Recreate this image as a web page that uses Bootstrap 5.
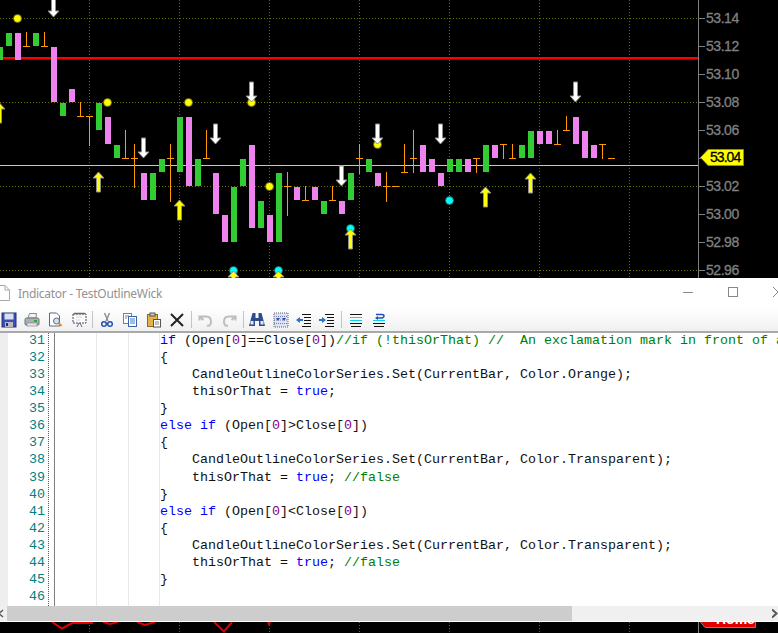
<!DOCTYPE html>
<html lang="en">
<head>
<meta charset="UTF-8">
<title>Indicator - TestOutlineWick</title>
<link href="https://cdn.jsdelivr.net/npm/bootstrap@5.3.3/dist/css/bootstrap.min.css" rel="stylesheet">
<script src="https://cdn.jsdelivr.net/npm/bootstrap@5.3.3/dist/js/bootstrap.bundle.min.js"></script>
<style>
html, body { height: 633px; overflow: hidden; background: #000; }
/* chart */
.chart-pane { height: 278px; overflow: hidden; }
.chart-pane svg { display: block; flex: none; }
.price-axis { width: 80px; border-left: 1px solid #808080; padding-top: 4px; font: 14px/28px "Liberation Sans", Arial, sans-serif; color: #808080; letter-spacing: -.45px; -webkit-text-stroke: .3px #808080; }
.axis-row { height: 28px; flex: none; }
.axis-tick { width: 6px; height: 1px; background: #808080; margin-right: 1px; }
.price-flag { position: absolute; left: 700px; top: 149px; width: 44px; height: 17px; }
.price-flag svg { position: absolute; left: 0; top: 0; }
.price-flag span { position: relative; display: block; padding-left: 10px; font: 14px/17px "Liberation Sans", Arial, sans-serif; letter-spacing: -.95px; color: #000; -webkit-text-stroke: .3px #000; }
/* editor window */
.editor-win { height: 343px; background: #fff; }
.title-bar { height: 30px; overflow: hidden; }
.doc-icon { flex: none; }
.title-text { font: 12px "Noto Sans", sans-serif; color: #929292; margin-left: 8px; letter-spacing: -.28px; padding-top: 1px; }
.win-controls { margin-right: -22px; flex: none; }
.win-btn { width: 45px; height: 30px; margin-top: -2px; }
.tool-bar { height: 25px; background: linear-gradient(#fff, #f0f0f0); border-bottom: 2px solid #a9a9a9; overflow: hidden; }
.tool-item { width: 23.2px; height: 23px; flex: none; }
.tool-item:first-child { margin-left: -2.6px; }
.tool-sep { width: 5.5px; height: 23px; flex: none; }
.tool-sep::after { content: ""; width: 1px; height: 17px; background: #c4c4c4; }
.code-pane { height: 273px; overflow: hidden; font: 13.33px/17.06px "Liberation Mono", "Courier New", monospace; }
.gutter-strip { width: 8px; background: #eeeeee; flex: none; }
.line-nums { width: 41px; flex: none; padding-right: 3px; text-align: right; color: #008080; border-right: 1px dotted #008080; }
.line-nums div:first-child, .code-body div:first-child { margin-top: -1px; }
.gutter-gap { width: 6px; flex: none; border-right: 1px solid #808080; }
.code-body { flex: 1 1 auto; min-width: 0; white-space: pre; overflow: hidden; padding-left: 105px; color: #111;
  background-image: linear-gradient(#e9e9e9, #e9e9e9), linear-gradient(#e9e9e9, #e9e9e9), linear-gradient(#e9e9e9, #e9e9e9);
  background-size: 1px 100%; background-repeat: no-repeat; background-position: 41px 0, 73px 0, 104px 0; }
.kw { color: #0000ff; }
.num { color: #800080; }
.cmt { color: #008000; }
.hscroll { height: 15px; background: #f0f0f0; }
.hscroll-end { width: 7px; flex: none; }
.hscroll-thumb { width: 565px; background: #cdcdcd; flex: none; }
.bottom-strip { height: 12px; border-top: 1px solid #fff; background: #000; overflow: hidden; }
.bottom-strip svg { display: block; }
.tag-text { font: bold 14px "Liberation Sans", Arial, sans-serif; fill: #fff; }
</style>
</head>
<body>

<!-- Chart -->
<div class="chart-pane d-flex position-relative bg-black">
  <svg id="chart" width="698" height="278" viewBox="0 0 698 278"></svg>
  <div class="price-axis flex-shrink-0">
    <div class="axis-row d-flex align-items-center"><span class="axis-tick"></span>53.14</div>
    <div class="axis-row d-flex align-items-center"><span class="axis-tick"></span>53.12</div>
    <div class="axis-row d-flex align-items-center"><span class="axis-tick"></span>53.10</div>
    <div class="axis-row d-flex align-items-center"><span class="axis-tick"></span>53.08</div>
    <div class="axis-row d-flex align-items-center"><span class="axis-tick"></span>53.06</div>
    <div class="axis-row d-flex align-items-center"><span class="axis-tick"></span></div>
    <div class="axis-row d-flex align-items-center"><span class="axis-tick"></span>53.02</div>
    <div class="axis-row d-flex align-items-center"><span class="axis-tick"></span>53.00</div>
    <div class="axis-row d-flex align-items-center"><span class="axis-tick"></span>52.98</div>
    <div class="axis-row d-flex align-items-center"><span class="axis-tick"></span>52.96</div>
  </div>
  <div class="price-flag">
    <svg width="44" height="17"><path d="M.5 8.500 8 .5h35.500v16H8z" fill="#ffff00" stroke="#808080"/></svg>
    <span>53.04</span>
  </div>
</div>

<!-- Editor window -->
<div class="editor-win d-flex flex-column">
  <div class="title-bar d-flex align-items-center">
    <svg class="doc-icon" width="10" height="16" viewBox="0 0 10 16"><path d="M-3 .5h8l4.500 4.500v10.500h-12.500" fill="#fff" stroke="#a8a8a8"/><path d="M5 .5v4.500h4.500" fill="none" stroke="#a8a8a8"/></svg>
    <span class="title-text">Indicator - TestOutlineWick</span>
    <div class="win-controls d-flex ms-auto">
      <div class="win-btn d-flex align-items-center justify-content-center"><svg width="10" height="10"><path d="M0 5.500h10" stroke="#888"/></svg></div>
      <div class="win-btn d-flex align-items-center justify-content-center"><svg width="10" height="10"><rect x=".5" y=".5" width="9" height="9" fill="none" stroke="#888"/></svg></div>
      <div class="win-btn d-flex align-items-center justify-content-center"><svg width="10" height="10"><path d="M0 0l10 10M10 0 0 10" stroke="#888"/></svg></div>
    </div>
  </div>

  <div class="tool-bar d-flex">
    <div class="tool-item d-flex align-items-center justify-content-center"><svg width="16" height="16" viewBox="0 0 16 16"><rect x="1" y="1" width="14" height="14" fill="#3d4fb0" stroke="#26307a"/><rect x="3.500" y="1.500" width="9" height="6" fill="#d8e0f4"/><rect x="4" y="10" width="8" height="5" fill="#b9b9c4"/><rect x="5" y="11" width="2" height="3" fill="#2a2f66"/></svg></div>
    <div class="tool-item d-flex align-items-center justify-content-center"><svg width="16" height="16" viewBox="0 0 16 16"><path d="M4 6 5.500 1.500h7L12 6z" fill="#f4f4f4" stroke="#8a8a8a"/><path d="M1 7.500q0-1.500 1.500-1.500h11q1.500 0 1.500 1.500v4.500q0 1-1 1H2q-1 0-1-1z" fill="#a8b0b8" stroke="#6c747c"/><rect x="3" y="11" width="10" height="3" fill="#e8e8e8" stroke="#777" stroke-width=".6"/><rect x="10" y="8" width="3" height="2" fill="#22b422"/></svg></div>
    <div class="tool-item d-flex align-items-center justify-content-center"><svg width="16" height="16" viewBox="0 0 16 16"><path d="M2.500 1h7l3 3v10h-10z" fill="#fff" stroke="#5a6a88"/><circle cx="9.500" cy="9" r="3" fill="#cfe4f4" stroke="#667"/><path d="m11.500 11 3 3" stroke="#e09020" stroke-width="2"/></svg></div>
    <div class="tool-item d-flex align-items-center justify-content-center"><svg width="16" height="16" viewBox="0 0 16 16"><rect x="2" y="2" width="13" height="9" fill="#fbfbf4" stroke="#3c4a6a" stroke-dasharray="2 1"/><path d="M3 1.500h11" stroke="#7a6a4a" stroke-width="1.500"/><path d="m8 11-2 4M9 11l2 4" stroke="#5a6a88"/><path d="M5 5h6M5 8h4" stroke="#d0d8e4"/></svg></div>
    <div class="tool-sep d-flex align-items-center justify-content-center"></div>
    <div class="tool-item d-flex align-items-center justify-content-center"><svg width="16" height="16" viewBox="0 0 16 16"><path d="m5.500 1 3.500 8M10.500 1 7 9" stroke="#8c8c98" stroke-width="1.400"/><circle cx="5" cy="12" r="2.300" fill="none" stroke="#2450b8" stroke-width="1.500"/><circle cx="11" cy="12" r="2.300" fill="none" stroke="#2450b8" stroke-width="1.500"/></svg></div>
    <div class="tool-item d-flex align-items-center justify-content-center"><svg width="16" height="16" viewBox="0 0 16 16"><rect x="1.500" y="1.500" width="8" height="10" fill="#fff" stroke="#6a82aa"/><rect x="6.500" y="4.500" width="8" height="10" fill="#fff" stroke="#3a62a8"/><path d="M8 7h5M8 9h5M8 11h5" stroke="#3f78d0"/><path d="M3 4h4M3 6h2" stroke="#6a82aa"/></svg></div>
    <div class="tool-item d-flex align-items-center justify-content-center"><svg width="16" height="16" viewBox="0 0 16 16"><rect x="1.500" y="2.500" width="10" height="12" fill="#e2b24c" stroke="#8a6a2a"/><rect x="4" y="1" width="5" height="3" fill="#c9c9c9" stroke="#555"/><rect x="7.500" y="7.500" width="7" height="7.500" fill="#fff" stroke="#555"/><path d="M9 10h4M9 12h4" stroke="#888"/></svg></div>
    <div class="tool-item d-flex align-items-center justify-content-center"><svg width="16" height="16" viewBox="0 0 16 16"><path d="m2 2 12 12M14 2 2 14" stroke="#222" stroke-width="2"/></svg></div>
    <div class="tool-sep d-flex align-items-center justify-content-center"></div>
    <div class="tool-item d-flex align-items-center justify-content-center"><svg width="16" height="16" viewBox="0 0 16 16"><path d="M5 4.500h-3.500v4M1.500 4.500 5.500 8M4 4.500h4q5 0 5 5t-4 4" fill="none" stroke="#bdbdbd" stroke-width="2"/></svg></div>
    <div class="tool-item d-flex align-items-center justify-content-center"><svg width="16" height="16" viewBox="0 0 16 16"><path d="M11 4.500h3.500v4M14.500 4.500 10.500 8M12 4.500h-4q-5 0-5 5t4 4" fill="none" stroke="#bdbdbd" stroke-width="2"/></svg></div>
    <div class="tool-sep d-flex align-items-center justify-content-center"></div>
    <div class="tool-item d-flex align-items-center justify-content-center"><svg width="16" height="16" viewBox="0 0 16 16"><path d="M3.500 1h3v5h3V1h3L16 14h-6V9H6v5H0z" fill="#2c4a8c"/><rect x="1.500" y="9" width="3" height="3.500" fill="#dfe8f6"/><rect x="11.500" y="9" width="3" height="3.500" fill="#dfe8f6"/></svg></div>
    <div class="tool-item d-flex align-items-center justify-content-center"><svg width="16" height="16" viewBox="0 0 16 16"><rect x="1" y="1" width="14" height="14" fill="#dfe2f2" stroke="#5b6080" stroke-dasharray="1 1"/><path d="M1 4.500h14M1 8h14M1 11.500h14" stroke="#7a7e9c" stroke-dasharray="1 1"/><path d="M3 6h4L5 9zM9 6h4l-2 3z" fill="#1e50c8"/></svg></div>
    <div class="tool-item d-flex align-items-center justify-content-center"><svg width="16" height="16" viewBox="0 0 16 16"><path d="M6 2.500h9M8 5.500h7M8 8.500h7M8 11.500h7M6 14.500h9" stroke="#111"/><path d="M7 7H4V5L0 8l4 3V9h3z" fill="#2a6ed0"/></svg></div>
    <div class="tool-item d-flex align-items-center justify-content-center"><svg width="16" height="16" viewBox="0 0 16 16"><path d="M6 2.500h9M8 5.500h7M8 8.500h7M8 11.500h7M6 14.500h9" stroke="#111"/><path d="M0 7h3V5l4 3-4 3V9H0z" fill="#2a6ed0"/></svg></div>
    <div class="tool-sep d-flex align-items-center justify-content-center"></div>
    <div class="tool-item d-flex align-items-center justify-content-center"><svg width="16" height="16" viewBox="0 0 16 16"><path d="M2 2.500h12M2 11.500h12M3 14.500h10" stroke="#111"/><path d="M2 5.500h12M2 8.500h12" stroke="#10d0f0"/></svg></div>
    <div class="tool-item d-flex align-items-center justify-content-center"><svg width="16" height="16" viewBox="0 0 16 16"><path d="M5 2.500h6q2 0 2 1.500t-2 2H7" fill="none" stroke="#2050c0" stroke-width="1.500"/><path d="M7 4v4L4 6z" fill="#2050c0"/><path d="M2 8.500h12" stroke="#10d0f0"/><path d="M2 11.500h12M3 14.500h10" stroke="#111"/></svg></div>
  </div>

  <div class="code-pane d-flex">
    <div class="gutter-strip"></div>
    <div class="line-nums" id="lineNums"></div>
    <div class="gutter-gap"></div>
    <div class="code-body"><div><span class="kw">if</span> (Open[<span class="num">0</span>]==Close[<span class="num">0</span>])<span class="cmt">//if (!thisOrThat) //  An exclamation mark in front of a</span></div><div>{</div><div>    CandleOutlineColorSeries.Set(CurrentBar, Color.Orange);</div><div>    thisOrThat = <span class="kw">true</span>;</div><div>}</div><div><span class="kw">else if</span> (Open[<span class="num">0</span>]&gt;Close[<span class="num">0</span>])</div><div>{</div><div>    CandleOutlineColorSeries.Set(CurrentBar, Color.Transparent);</div><div>    thisOrThat = <span class="kw">true</span>; <span class="cmt">//false</span></div><div>}</div><div><span class="kw">else if</span> (Open[<span class="num">0</span>]&lt;Close[<span class="num">0</span>])</div><div>{</div><div>    CandleOutlineColorSeries.Set(CurrentBar, Color.Transparent);</div><div>    thisOrThat = <span class="kw">true</span>; <span class="cmt">//false</span></div><div>}</div><div> </div></div>
  </div>

  <div class="hscroll d-flex">
    <div class="hscroll-end d-flex align-items-center overflow-hidden"><svg width="7" height="15"><path d="M3 4-1 7.500 3 11" fill="none" stroke="#555" stroke-width="1.500"/></svg></div>
    <div class="hscroll-thumb"></div>
    <div class="ms-auto d-flex align-items-center"><svg width="6" height="15"><path d="M0 3.500 4.500 7.500 0 11.500" fill="none" stroke="#555" stroke-width="2"/></svg></div>
  </div>
</div>

<!-- What is left of the chart under the window -->
<div class="bottom-strip">
  <svg width="778" height="12" viewBox="0 621 778 12">
    <path d="M89.500 621v12M179.500 621v12M269.500 621v12M359.500 621v12M449.500 621v12M539.500 621v12M629.500 621v12" stroke="#6b6b00" stroke-dasharray="1 2"/>
    <path d="M698.500 621v12" stroke="#808080"/>
    <path d="M52 621 62 627.500 72 622H93M103 621l7 2 8-2M137 621l8 3 10-3M214 621l10 9.500 8-9.500M268 621l1 2 1-2" fill="none" stroke="#e00000" stroke-width="2"/>
    <path d="M700 620.500 705 626.500H755.500V620.500z" fill="#e00000" stroke="#808080"/>
    <text class="tag-text" x="716" y="623">Home</text>
  </svg>
</div>

<script>
// candles as [left, top, bottom]
const green = [[-3,47,60],[6,33,46],[33,33,46],[60,103,116],[96,103,130],[114,145,158],[150,173,200],[159,159,172],[177,117,172],[195,159,186],[231,187,242],[240,159,186],[258,201,228],[276,173,242],[321,201,214],[348,173,200],[366,159,172],[447,159,172],[456,159,172],[483,145,172],[519,145,158],[528,131,158]];
const pink = [[15,33,60],[51,47,102],[69,89,102],[105,117,144],[141,173,200],[186,117,186],[213,173,214],[222,215,242],[249,145,228],[267,215,242],[294,187,200],[312,187,200],[339,201,214],[375,173,186],[420,145,172],[429,159,172],[438,173,186],[465,159,172],[492,145,158],[537,131,144],[546,131,144],[573,117,144],[582,131,158],[591,145,158]];
// doji as [x, top, bottom, tick y]
const doji = [[26,32,46,46],[44,32,46,46],[80,102,116,116],[89,116,145,116],[125,130,158,158],[134,144,187,158],[170,144,201,158],[206,130,158,158],[287,172,215,186],[305,186,200,200],[332,186,200,200],[359,144,173,158],[386,172,201,186],[395,186,186,186],[404,144,172,172],[413,130,172,158],[476,158,172,158],[503,144,158,144],[512,144,158,158],[557,130,144,144],[566,116,130,130],[602,144,158,144],[611,158,158,158]];
const yellowDots = [[17,18],[107,102],[188,102],[251,102],[269,186],[377,144]];
const cyanDots = [[233,270],[278,270],[350,228],[449,200]];
const whiteArrows = [[53,17],[143,158],[215,144],[251,102],[341,186],[377,144],[440,144],[575,102]];
const yellowArrows = [[-1,103],[98,172],[179,200],[233,271],[278,271],[350,229],[485,187],[530,173]];

let svg = '';
[89,179,269,359,449,539,629].forEach(x => {
  svg += `<path d="M${x}.5 0V278" stroke="#6b6b00" stroke-dasharray="1 2"/>`;
});
[18,102,186,270].forEach(y => {
  svg += `<path d="M0 ${y}.5H698" stroke="#6b6b00" stroke-dasharray="1 2"/>`;
});
svg += '<rect x="0" y="165" width="698" height="1" fill="#66eeee"/>';
svg += '<rect x="0" y="57" width="698" height="2.500" fill="#ff0000"/>';
green.forEach(c => { svg += `<rect x="${c[0]}" y="${c[1]}" width="6" height="${c[2]-c[1]}" fill="#32cd32"/>`; });
pink.forEach(c => { svg += `<rect x="${c[0]}" y="${c[1]}" width="6" height="${c[2]-c[1]}" fill="#ee82ee"/>`; });
doji.forEach(d => {
  svg += `<rect x="${d[0]}" y="${d[1]}" width="1" height="${d[2]-d[1]+1}" fill="#ff9a00"/>`;
  svg += `<rect x="${d[0]-3}" y="${d[3]}" width="7" height="1" fill="#ff9a00"/>`;
});
yellowDots.forEach(p => { svg += `<circle cx="${p[0]+.5}" cy="${p[1]+.5}" r="4" fill="#ffff00" stroke="#55551a" stroke-width=".8"/>`; });
cyanDots.forEach(p => { svg += `<circle cx="${p[0]+.5}" cy="${p[1]+.5}" r="4" fill="#00ffff" stroke="#1a5555" stroke-width=".8"/>`; });
whiteArrows.forEach(a => {
  const x = a[0] + .5, t = a[1];
  svg += `<path d="M${x-2} ${t-20}h4v14h3.500l-5.500 6-5.500-6h3.500z" fill="#fff" stroke="#8c8c8c"/>`;
});
yellowArrows.forEach(a => {
  const x = a[0] + .5, t = a[1];
  svg += `<path d="M${x-2} ${t+20}h4v-14h3.500l-5.500-6-5.500 6h3.500z" fill="#ffff00" stroke="#8c8c8c"/>`;
});
document.getElementById('chart').innerHTML = svg;

// line numbers 31 to 46
let nums = '';
for (let i = 31; i <= 46; i++) nums += `<div>${i}</div>`;
document.getElementById('lineNums').innerHTML = nums;
</script>
</body>
</html>
